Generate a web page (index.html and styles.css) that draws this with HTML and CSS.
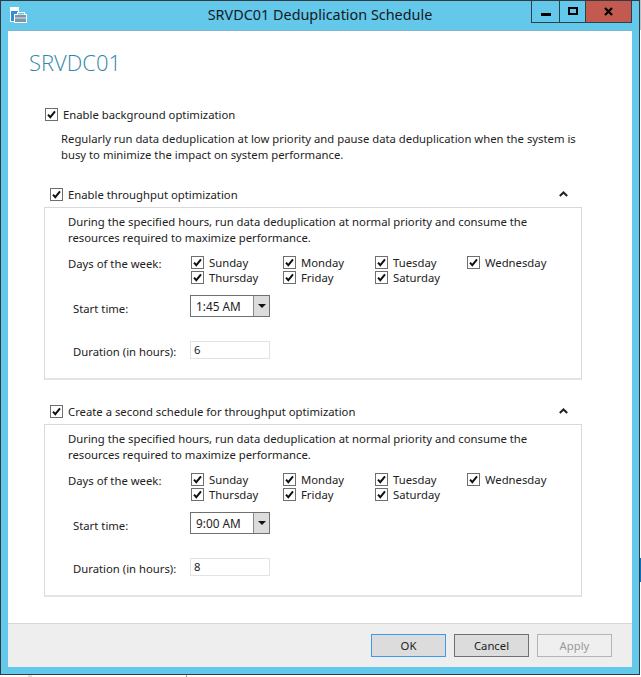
FILE: index.html
```html
<!DOCTYPE html>
<html lang="en">
<head>
<meta charset="utf-8">
<title>SRVDC01 Deduplication Schedule</title>
<link rel="stylesheet" href="styles.css">
</head>
<body>
<svg class="defs" width="0" height="0" aria-hidden="true">
  <symbol id="tick" viewBox="0 0 13 13"><path d="M3 6.600 5.300 9.200 10 3.400" fill="none" stroke="#111" stroke-width="2"/></symbol>
</svg>
<div class="behind behind-top"></div>
<div class="behind behind-blue"></div>
<div class="behind behind-grey"></div>
<div class="behind behind-line"></div>
<div class="window">
  <header class="titlebar">
    <svg class="appicon" width="17" height="16" viewBox="0 0 17 16">
      <path d="M0 0h9v15H0z" fill="#fff"/>
      <path d="M1 4h7v10H1z" fill="#2f8fd8"/>
      <path d="M4 7h3V5h8v2h2v9H4z" fill="#fff"/>
      <path d="M5 8h11v7H5z" fill="#7e96a8"/>
      <path d="M8 6h6v1.500H8z" fill="#63c8ea"/>
      <path d="M5 10.500h11v1H5z" fill="#dfe7ec"/>
    </svg>
    <h1 class="title">SRVDC01 Deduplication Schedule</h1>
    <div class="controls">
      <div class="ctl ctl-min"><span class="min-glyph"></span></div>
      <div class="ctl ctl-max"><span class="max-glyph"></span></div>
      <div class="ctl ctl-close"><svg width="9" height="9" viewBox="0 0 9 9"><path d="M1 1 8 8M8 1 1 8" stroke="#000" stroke-width="2.200" fill="none"/></svg></div>
    </div>
  </header>
  <div class="client">
    <main class="content">
      <h2 class="server">SRVDC01</h2>
      <label class="opt opt-main"><span class="box"><svg><use href="#tick"/></svg></span>Enable background optimization</label>
      <p class="desc">Regularly run data deduplication at low priority and pause data deduplication when the system is<br>busy to minimize the impact on system performance.</p>

      <section class="schedule">
        <div class="sched-head">
          <label class="opt"><span class="box"><svg><use href="#tick"/></svg></span>Enable throughput optimization</label>
          <svg class="chev" width="9" height="6" viewBox="0 0 9 6"><path d="M.8 5 4.500 1.500 8.200 5" fill="none" stroke="#222" stroke-width="2"/></svg>
        </div>
        <div class="group">
          <p class="group-text">During the specified hours, run data deduplication at normal priority and consume the<br>resources required to maximize performance.</p>
          <div class="days-row">
            <span class="days-label">Days of the week:</span>
            <div class="days">
              <label class="opt"><span class="box"><svg><use href="#tick"/></svg></span>Sunday</label>
              <label class="opt"><span class="box"><svg><use href="#tick"/></svg></span>Monday</label>
              <label class="opt"><span class="box"><svg><use href="#tick"/></svg></span>Tuesday</label>
              <label class="opt"><span class="box"><svg><use href="#tick"/></svg></span>Wednesday</label>
              <label class="opt"><span class="box"><svg><use href="#tick"/></svg></span>Thursday</label>
              <label class="opt"><span class="box"><svg><use href="#tick"/></svg></span>Friday</label>
              <label class="opt"><span class="box"><svg><use href="#tick"/></svg></span>Saturday</label>
            </div>
          </div>
          <div class="field field-time">
            <span class="field-label">Start time:</span>
            <div class="combo"><span class="combo-value">1:45 AM</span><span class="combo-btn"><span class="arrow"></span></span></div>
          </div>
          <div class="field field-duration">
            <span class="field-label">Duration (in hours):</span>
            <div class="textbox">6</div>
          </div>
        </div>
      </section>

      <section class="schedule schedule-second">
        <div class="sched-head">
          <label class="opt"><span class="box"><svg><use href="#tick"/></svg></span>Create a second schedule for throughput optimization</label>
          <svg class="chev" width="9" height="6" viewBox="0 0 9 6"><path d="M.8 5 4.500 1.500 8.200 5" fill="none" stroke="#222" stroke-width="2"/></svg>
        </div>
        <div class="group">
          <p class="group-text">During the specified hours, run data deduplication at normal priority and consume the<br>resources required to maximize performance.</p>
          <div class="days-row">
            <span class="days-label">Days of the week:</span>
            <div class="days">
              <label class="opt"><span class="box"><svg><use href="#tick"/></svg></span>Sunday</label>
              <label class="opt"><span class="box"><svg><use href="#tick"/></svg></span>Monday</label>
              <label class="opt"><span class="box"><svg><use href="#tick"/></svg></span>Tuesday</label>
              <label class="opt"><span class="box"><svg><use href="#tick"/></svg></span>Wednesday</label>
              <label class="opt"><span class="box"><svg><use href="#tick"/></svg></span>Thursday</label>
              <label class="opt"><span class="box"><svg><use href="#tick"/></svg></span>Friday</label>
              <label class="opt"><span class="box"><svg><use href="#tick"/></svg></span>Saturday</label>
            </div>
          </div>
          <div class="field field-time">
            <span class="field-label">Start time:</span>
            <div class="combo"><span class="combo-value">9:00 AM</span><span class="combo-btn"><span class="arrow"></span></span></div>
          </div>
          <div class="field field-duration">
            <span class="field-label">Duration (in hours):</span>
            <div class="textbox">8</div>
          </div>
        </div>
      </section>
    </main>
    <footer class="footer">
      <button class="btn btn-default" type="button">OK</button>
      <button class="btn btn-cancel" type="button">Cancel</button>
      <button class="btn btn-disabled" type="button">Apply</button>
    </footer>
  </div>
</div>
</body>
</html>
```

FILE: styles.css
```css
* { box-sizing: border-box; }
html, body { margin: 0; padding: 0; background: #fff; }
body {
  position: relative;
  width: 641px;
  height: 677px;
  overflow: hidden;
  font-family: "Noto Sans", "Open Sans", sans-serif;
  font-size: 11.3px;
  line-height: 16px;
  color: #222;
}
.defs { position: absolute; }
p, h1, h2 { margin: 0; font-weight: 400; }

.behind { position: absolute; }
.behind-top { left: 640px; top: 0; width: 1px; height: 30px; background: #b9c4ca; }
.behind-blue { left: 640px; top: 558px; width: 1px; height: 24px; background: #0a6fc0; }
.behind-grey { left: 28px; top: 675px; width: 4px; height: 2px; background: #e2e2e2; }
.behind-line { left: 186px; top: 675px; width: 1px; height: 2px; background: #a0a0a0; }

.window {
  width: 640px;
  height: 675px;
  border: 1px solid #333a40;
  background: #63c8ea;
  display: flex;
  flex-direction: column;
  padding: 0 7px 7px 7px;
}
.titlebar {
  height: 30px;
  flex: none;
  display: grid;
  grid-template-columns: 1fr auto 1fr;
  align-items: start;
}
.appicon { margin: 6px 0 0 2px; }
.title {
  font-size: 14.4px;
  line-height: 20px;
  color: #16191c;
  margin-top: 4px;
}
.controls { display: flex; justify-self: end; height: 22px; }
.ctl {
  height: 22px;
  border: 1px solid #2c3f4a;
  border-top: 0;
  display: flex;
  align-items: center;
  justify-content: center;
}
.ctl + .ctl { border-left: 0; }
.ctl-min { width: 29px; }
.ctl-max { width: 26px; }
.ctl-close { width: 46px; background: #c25a50; }
.min-glyph { width: 10px; height: 3px; background: #000; margin-top: 5px; }
.max-glyph { width: 10px; height: 8px; border: 2px solid #000; margin-top: -2px; }
.ctl-close svg { margin-top: -1px; }

.client {
  flex: 1;
  min-height: 0;
  background: #fff;
  display: flex;
  flex-direction: column;
  box-shadow: 0 -1px 0 #7fb6cf;
}
.content { flex: 1; padding: 0; }
.server {
  font-family: "Open Sans", "Noto Sans", sans-serif;
  font-weight: 300;
  font-size: 22px;
  line-height: 32px;
  color: #2f86ab;
  margin: 15px 0 0 21px;
}
.opt {
  display: flex;
  align-items: center;
  height: 15px;
  white-space: nowrap;
}
.box {
  flex: none;
  width: 13px;
  height: 13px;
  border: 1px solid #6e6e6e;
  background: #fff;
  margin-right: 5px;
  position: relative;
}
.box svg { position: absolute; left: -1px; top: -1px; width: 13px; height: 13px; }
.opt-main { margin: 29px 0 0 37px; }
.desc { margin: 9px 0 0 53px; color: #1e1e1e; }

.schedule { margin: 24px 0 0 36px; width: 538px; }
.sched-head {
  display: flex;
  align-items: center;
  justify-content: space-between;
  padding: 0 14px 0 6px;
  height: 15px;
}
.chev { margin-top: -2px; }
.group {
  margin-top: 5px;
  height: 173px;
  border: 1px solid #d9d9d9;
  border-bottom-width: 2px;
  border-bottom-color: #e4e4e4;
  padding: 6px 0 0 23px;
}
.days-row { display: flex; margin-top: 9px; }
.days-label { width: 123px; flex: none; margin-top: 1px; }
.days {
  display: grid;
  grid-template-columns: repeat(4, 92px);
  grid-auto-rows: 15px;
}
.field { display: flex; align-items: center; padding-left: 5px; }
.field-label { width: 117px; flex: none; padding-top: 6px; line-height: 16px; }
.field-time { margin-top: 10px; }
.field-duration { margin-top: 23px; }
.field-duration .field-label { padding-top: 4px; line-height: 16px; }
.combo {
  width: 80px;
  height: 22px;
  border: 1px solid #707070;
  display: flex;
}
.combo-value { flex: 1; padding-left: 5px; line-height: 20px; font-size: 11.8px; }
.combo-btn {
  width: 16px;
  background: #dcdcdc;
  border-left: 1px solid #8a8a8a;
  display: flex;
  align-items: center;
  justify-content: center;
}
.arrow {
  width: 0;
  height: 0;
  border: 4px solid transparent;
  border-top: 4px solid #111;
  border-bottom: 0;
}
.textbox {
  width: 80px;
  height: 18px;
  border: 1px solid #e3e3e3;
  padding-left: 3px;
  line-height: 15px;
}

.footer {
  flex: none;
  height: 44px;
  background: #eeeeef;
  border-top: 1px solid #d8d8d8;
  display: flex;
  justify-content: flex-end;
  gap: 8px;
  padding: 10px 20px 0 0;
}
.btn {
  width: 75px;
  height: 23px;
  background: #dcdcdc;
  border: 1px solid #707070;
  font: inherit;
  color: #222;
  padding: 0;
}
.btn-default { border-color: #3c9bf0; }
.btn-disabled { background: #efefef; border-color: #b4b4b4; color: #9a9a9a; }
```
